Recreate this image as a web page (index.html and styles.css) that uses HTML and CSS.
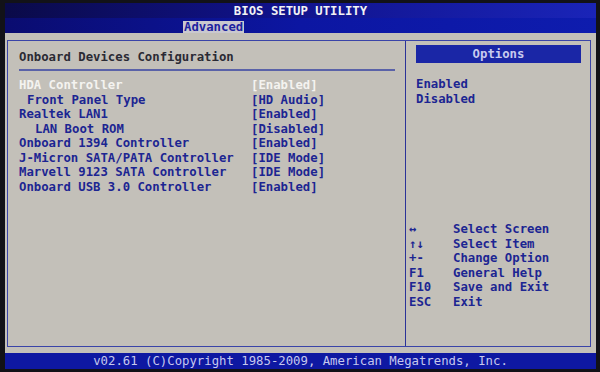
FILE: index.html
```html
<!DOCTYPE html>
<html lang="en">
<head>
    <meta charset="UTF-8">
    <meta name="viewport" content="width=device-width, initial-scale=1.0">
    <title>BIOS Setup Utility</title>
    <link rel="stylesheet" href="styles.css">
</head>
<body>
    <div class="screen">
        <header class="title-bar">BIOS SETUP UTILITY</header>
        <nav class="tab-bar">
            <span class="tab active">Advanced</span>
        </nav>

        <main class="main">
            <div class="frame">
                <section class="settings">
                    <h1>Onboard Devices Configuration</h1>
                    <ul class="items">
                        <li class="item selected"><span class="name">HDA Controller</span><span class="value">[Enabled]</span></li>
                        <li class="item"><span class="name indent-1">Front Panel Type</span><span class="value">[HD Audio]</span></li>
                        <li class="item"><span class="name">Realtek LAN1</span><span class="value">[Enabled]</span></li>
                        <li class="item"><span class="name indent-2">LAN Boot ROM</span><span class="value">[Disabled]</span></li>
                        <li class="item"><span class="name">Onboard 1394 Controller</span><span class="value">[Enabled]</span></li>
                        <li class="item"><span class="name">J-Micron SATA/PATA Controller</span><span class="value">[IDE Mode]</span></li>
                        <li class="item"><span class="name">Marvell 9123 SATA Controller</span><span class="value">[IDE Mode]</span></li>
                        <li class="item"><span class="name">Onboard USB 3.0 Controller</span><span class="value">[Enabled]</span></li>
                    </ul>
                </section>

                <aside class="help">
                    <div class="options-title">Options</div>
                    <ul class="options">
                        <li>Enabled</li>
                        <li>Disabled</li>
                    </ul>

                    <ul class="keys">
                        <li><span class="key">&harr;</span><span>Select Screen</span></li>
                        <li><span class="key">&uarr;&darr;</span><span>Select Item</span></li>
                        <li><span class="key">+-</span><span>Change Option</span></li>
                        <li><span class="key">F1</span><span>General Help</span></li>
                        <li><span class="key">F10</span><span>Save and Exit</span></li>
                        <li><span class="key">ESC</span><span>Exit</span></li>
                    </ul>
                </aside>
            </div>
        </main>

        <footer class="footer">v02.61 (C)Copyright 1985-2009, American Megatrends, Inc.</footer>
    </div>
</body>
</html>
```

FILE: styles.css
```css
/* General Styles */
body {
    margin: 0;
    padding: 0;
    background-color: #101018;
    font-family: "DejaVu Sans Mono", "Liberation Mono", monospace;
    font-weight: bold;
    font-size: 12.3px;
}

ul {
    list-style: none;
    margin: 0;
    padding: 0;
}

.screen {
    width: 600px;
    height: 372px;
    box-sizing: border-box;
    padding: 3px 4px 3px 5px;
    display: flex;
    flex-direction: column;
    background-color: #121218;
}

/* Top bars */
.title-bar {
    height: 15px;
    line-height: 16px;
    text-align: center;
    color: #f2f2f4;
    background: linear-gradient(90deg, #0a0a48 0%, #10128a 45%, #1a24b8 100%);
}

.tab-bar {
    height: 15px;
    display: flex;
    align-items: flex-end;
    padding-left: 178px;
    background: linear-gradient(90deg, #0a0c70 0%, #0c16a2 50%, #0e1cae 100%);
}

.tab {
    height: 13px;
    line-height: 13px;
    margin-bottom: -1px;
    padding: 0 1px;
}

.tab.active {
    background-color: #c9c8cf;
    color: #1c22a0;
}

/* Main area */
.main {
    flex-grow: 1;
    background-color: #c3c0b9;
    padding: 7px 5px 6px 2px;
    display: flex;
}

.frame {
    flex-grow: 1;
    display: flex;
    border: 1px solid #3a44a8;
}

.settings {
    width: 397px;
    padding: 9px 10px 0 11px;
    box-sizing: border-box;
    color: #1c2592;
}

.settings h1 {
    margin: 0;
    font-size: 12.3px;
    line-height: 15px;
    color: #2a2a34;
    padding-bottom: 4px;
    border-bottom: 2px solid #5a62a8;
}

.items {
    margin-top: 7px;
}

.item {
    display: flex;
    line-height: 14.5px;
}

.item .name {
    width: 232px;
    flex-shrink: 0;
}

.item.selected {
    color: #f4f3f0;
}

.indent-1 {
    padding-left: 8px;
    box-sizing: border-box;
}

.indent-2 {
    padding-left: 16px;
    box-sizing: border-box;
}

/* Help panel */
.help {
    flex-grow: 1;
    border-left: 1px solid #2a3298;
    padding: 4px 9px 37px 10px;
    display: flex;
    flex-direction: column;
    color: #1c2592;
}

.options-title {
    height: 18px;
    line-height: 18px;
    text-align: center;
    background-color: #1a26a6;
    color: #c8cbef;
}

.options {
    margin-top: 14px;
    line-height: 15px;
}

.keys {
    margin-top: auto;
    margin-left: -7px;
    line-height: 14.5px;
}

.keys li {
    display: flex;
}

.keys .key {
    width: 44px;
    flex-shrink: 0;
}

/* Footer */
.footer {
    height: 16px;
    line-height: 16px;
    text-align: center;
    font-weight: normal;
    color: #c6c8ee;
    background-color: #0e18a2;
    margin-top: 0;
}
```
